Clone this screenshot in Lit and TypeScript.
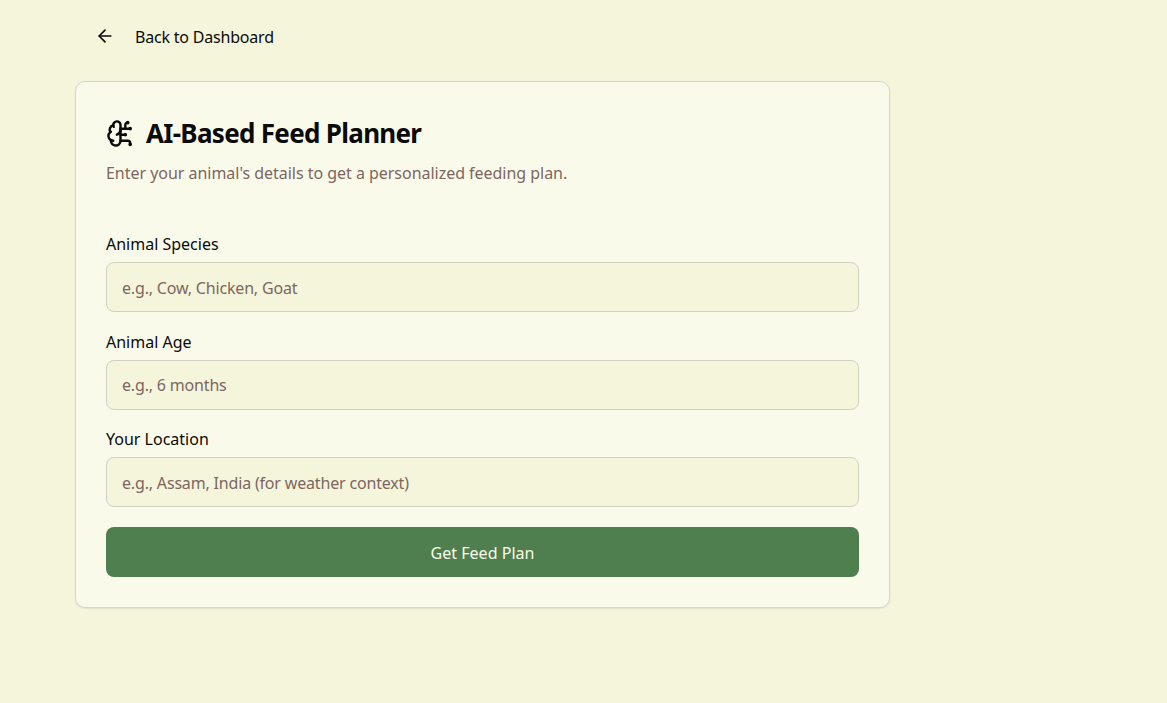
import { LitElement, html, css } from 'lit';
import { customElement } from 'lit/decorators.js';

const fields = [
  { label: 'Animal Species', placeholder: 'e.g., Cow, Chicken, Goat' },
  { label: 'Animal Age', placeholder: 'e.g., 6 months' },
  { label: 'Your Location', placeholder: 'e.g., Assam, India (for weather context)' },
];

@customElement('app-root')
export class AppRoot extends LitElement {
  static styles = css`
    :host {
      display: block;
      min-height: 703px;
      background: #f5f5dc;
      color: #0a0a0a;
      font-family: 'Noto Sans', sans-serif;
      box-sizing: border-box;
      padding: 16px 277px 0 75px;
    }
    .back {
      display: inline-flex;
      align-items: center;
      gap: 20px;
      height: 40px;
      padding: 0 16px 0 20px;
      font-size: 16px;
      color: #0a0a0a;
      text-decoration: none;
      letter-spacing: -0.2px;
    }
    .back span { padding-top: 1px; }
    .back svg { width: 20px; height: 20px; }
    .card {
      margin-top: 25px;
      box-sizing: border-box;
      height: 527px;
      padding: 30px;
      background: #fafaeb;
      border: 1px solid #d3d6c8;
      border-radius: 10px;
      box-shadow: 0 1px 2px rgba(0, 0, 0, 0.08);
    }
    .title {
      display: flex;
      align-items: center;
      gap: 11px;
      margin: 0;
      height: 42px;
      font-size: 26px;
      font-weight: 700;
      letter-spacing: -0.7px;
    }
    .title svg { width: 29px; height: 29px; }
    .sub {
      margin: 7px 0 0;
      font-size: 16px;
      line-height: 24px;
      color: #7d6660;
      letter-spacing: -0.03px;
    }
    form { display: flex; flex-direction: column; margin-top: 47px; }
    label {
      display: block;
      font-size: 16px;
      line-height: 24px;
      letter-spacing: 0;
      margin-bottom: 6px;
    }
    .field { height: 97.5px; }
    input {
      display: block;
      width: 100%;
      box-sizing: border-box;
      height: 50px;
      padding: 1px 15px 0;
      background: #f5f5dc;
      border: 1px solid #cdd2c4;
      border-radius: 8px;
      font: inherit;
      font-size: 16px;
      letter-spacing: -0.175px;
      outline: none;
    }
    input::placeholder { color: #7d6660; opacity: 1; }
    button {
      height: 50px;
      margin-top: 2.5px;
      padding: 2px 0 0;
      background: #4f7f4f;
      color: #fafaeb;
      border: none;
      border-radius: 8px;
      font: inherit;
      font-size: 16px;
      letter-spacing: 0.03px;
    }
  `;

  render() {
    return html`
      <a class="back" href="#">
        <svg viewBox="0 0 24 24" fill="none" stroke="currentColor" stroke-width="2" stroke-linecap="round" stroke-linejoin="round">
          <path d="m12 19-7-7 7-7" />
          <path d="M19 12H5" />
        </svg>
        <span>Back to Dashboard</span>
      </a>
      <section class="card">
        <h1 class="title">
          <svg viewBox="0 0 24 24" fill="none" stroke="currentColor" stroke-width="2" stroke-linecap="round" stroke-linejoin="round">
            <path d="M12 5a3 3 0 1 0-5.997.125 4 4 0 0 0-2.526 5.77 4 4 0 0 0 .556 6.588A4 4 0 1 0 12 18Z" />
            <path d="M9 13a4.5 4.5 0 0 0 3-4" />
            <path d="M6.003 5.125A3 3 0 0 0 6.401 6.5" />
            <path d="M3.477 10.896a4 4 0 0 1 .585-.396" />
            <path d="M6 18a4 4 0 0 1-1.967-.516" />
            <path d="M12 13h4" />
            <path d="M12 18h6a2 2 0 0 1 2 2v1" />
            <path d="M12 8h8" />
            <path d="M16 8V5a2 2 0 0 1 2-2" />
            <circle cx="16" cy="13" r=".5" />
            <circle cx="18" cy="3" r=".5" />
            <circle cx="20" cy="21" r=".5" />
            <circle cx="20" cy="8" r=".5" />
          </svg>
          AI-Based Feed Planner
        </h1>
        <p class="sub">Enter your animal's details to get a personalized feeding plan.</p>
        <form @submit=${(e: Event) => e.preventDefault()}>
          ${fields.map(
            (f) => html`
              <div class="field">
                <label>${f.label}</label>
                <input type="text" placeholder=${f.placeholder} />
              </div>
            `
          )}
          <button type="submit">Get Feed Plan</button>
        </form>
      </section>
    `;
  }
}
